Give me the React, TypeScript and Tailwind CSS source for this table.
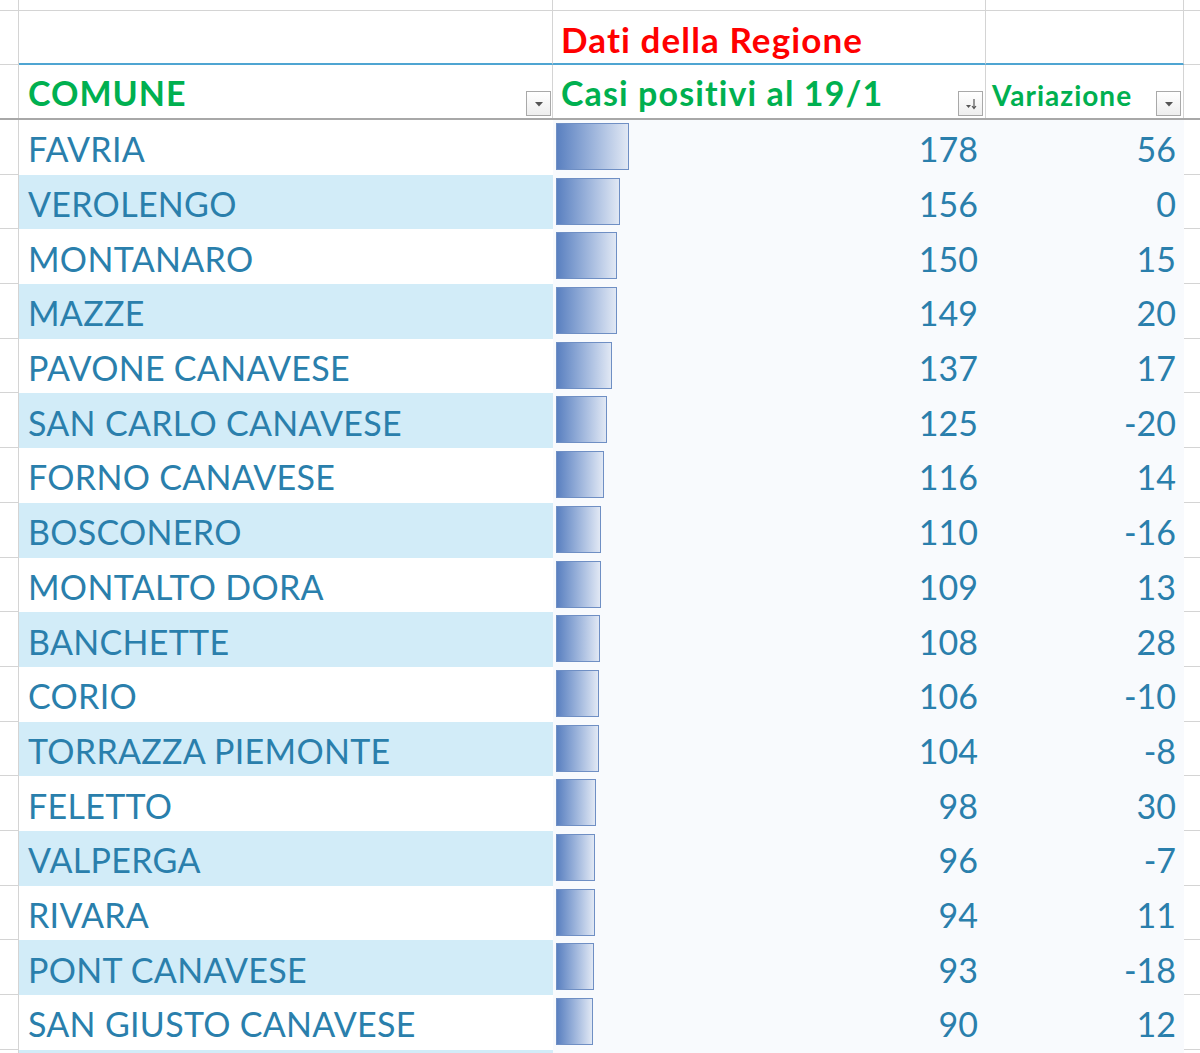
import React from 'react';

const rows: [string, number, number][] = [
  ['FAVRIA', 178, 56],
  ['VEROLENGO', 156, 0],
  ['MONTANARO', 150, 15],
  ['MAZZE', 149, 20],
  ['PAVONE CANAVESE', 137, 17],
  ['SAN CARLO CANAVESE', 125, -20],
  ['FORNO CANAVESE', 116, 14],
  ['BOSCONERO', 110, -16],
  ['MONTALTO DORA', 109, 13],
  ['BANCHETTE', 108, 28],
  ['CORIO', 106, -10],
  ['TORRAZZA PIEMONTE', 104, -8],
  ['FELETTO', 98, 30],
  ['VALPERGA', 96, -7],
  ['RIVARA', 94, 11],
  ['PONT CANAVESE', 93, -18],
  ['SAN GIUSTO CANAVESE', 90, 12],
  ['', 88, 0],
];

const font = { fontFamily: 'Lato, "Open Sans", sans-serif' };
const grid = 'grid grid-cols-[19px_534px_433px_198px_1fr]';

function FilterButton({ sort }: { sort?: boolean }) {
  return (
    <div className="w-[25px] h-[25px] border border-[#a9a9a9] bg-gradient-to-b from-white to-[#eeeeee] flex items-center justify-center">
      {sort ? (
        <svg width="16" height="14" viewBox="0 0 16 14">
          <path d="M3 8h5l-2.5 3z" fill="#555" />
          <path d="M11 2v9M9 9l2 2.5 2-2.5" stroke="#555" strokeWidth="1.2" fill="none" />
        </svg>
      ) : (
        <svg width="12" height="8" viewBox="0 0 12 8">
          <path d="M2 2h8l-4 4.5z" fill="#555" />
        </svg>
      )}
    </div>
  );
}

export default function App() {
  return (
    <div className="w-[1200px] h-[1053px] overflow-hidden bg-white" style={font}>
      {/* partial row above */}
      <div className={`${grid} h-[11px]`}>
        <div className="border-r border-b border-[#d4d4d4]" />
        <div className="border-r border-b border-[#d4d4d4]" />
        <div className="border-r border-b border-[#d4d4d4]" />
        <div className="border-r border-b border-[#d4d4d4]" />
        <div className="border-b border-[#d4d4d4]" />
      </div>

      {/* title row */}
      <div className={`${grid} h-[54px]`}>
        <div className="border-r border-b border-[#d4d4d4]" />
        <div className="border-r border-[#d4d4d4] border-b-2 border-b-[#4fa5d2]" />
        <div className="border-r border-[#d4d4d4] border-b-2 border-b-[#4fa5d2] flex items-end pl-[8px] pb-[4px]">
          <span className="text-[#ff0000] font-bold text-[35px] leading-none tracking-[1.1px] pb-[2px]">Dati della Regione</span>
        </div>
        <div className="border-r border-[#d4d4d4] border-b-2 border-b-[#4fa5d2]" />
        <div className="border-b border-[#d4d4d4]" />
      </div>

      {/* header row */}
      <div className={`${grid} h-[55px] border-b-2 border-[#a8a8a8]`}>
        <div className="border-r border-[#d4d4d4]" />
        <div className="border-r border-[#d4d4d4] flex items-end justify-between pl-[9px] pr-[1px] pb-[2px]">
          <span className="text-[#00b050] font-bold text-[34px] leading-none pb-[6px] tracking-[1px]">COMUNE</span>
          <FilterButton />
        </div>
        <div className="border-r border-[#d4d4d4] flex items-end justify-between pl-[8px] pr-[2px] pb-[2px]">
          <span className="text-[#00b050] font-bold text-[34px] leading-none pb-[6px] tracking-[1.1px]">Casi positivi al 19/1</span>
          <FilterButton sort />
        </div>
        <div className="border-r border-[#d4d4d4] flex items-end justify-between pl-[6px] pr-[2px] pb-[2px]">
          <span className="text-[#00b050] font-bold text-[28px] leading-none pb-[7px] tracking-[1px]">Variazione</span>
          <FilterButton />
        </div>
        <div />
      </div>

      {/* data rows */}
      {rows.map(([name, cases, diff], i) => (
        <div key={i} className={`${grid} h-[54.7px]`}>
          <div className="border-r border-b border-[#d4d4d4]" />
          <div className={`${i % 2 === 1 ? 'bg-[#d2ecf8]' : 'bg-white'} flex items-center pl-[9px] pt-[4px]`}>
            <span className="text-[#2a7fac] text-[34px] leading-none tracking-[0.3px]">{name}</span>
          </div>
          <div className="bg-[#f8fafd] flex items-start pr-[8px]">
            <div
              className="mt-[3px] ml-[3px] h-[47px] border border-[#6f8fc4] bg-gradient-to-r from-[#5a80c0] to-[#e1e8f4]"
              style={{ width: Math.round(cases * 0.41) }}
            />
            <span className="ml-auto self-center pt-[4px] text-[#2a7fac] text-[34px] leading-none">{name ? cases : ''}</span>
          </div>
          <div className="bg-[#f8fafd] flex items-center justify-end pr-[8px] pt-[4px]">
            <span className="text-[#2a7fac] text-[34px] leading-none">{name ? diff : ''}</span>
          </div>
          <div className="border-b border-[#d4d4d4]" />
        </div>
      ))}
    </div>
  );
}
